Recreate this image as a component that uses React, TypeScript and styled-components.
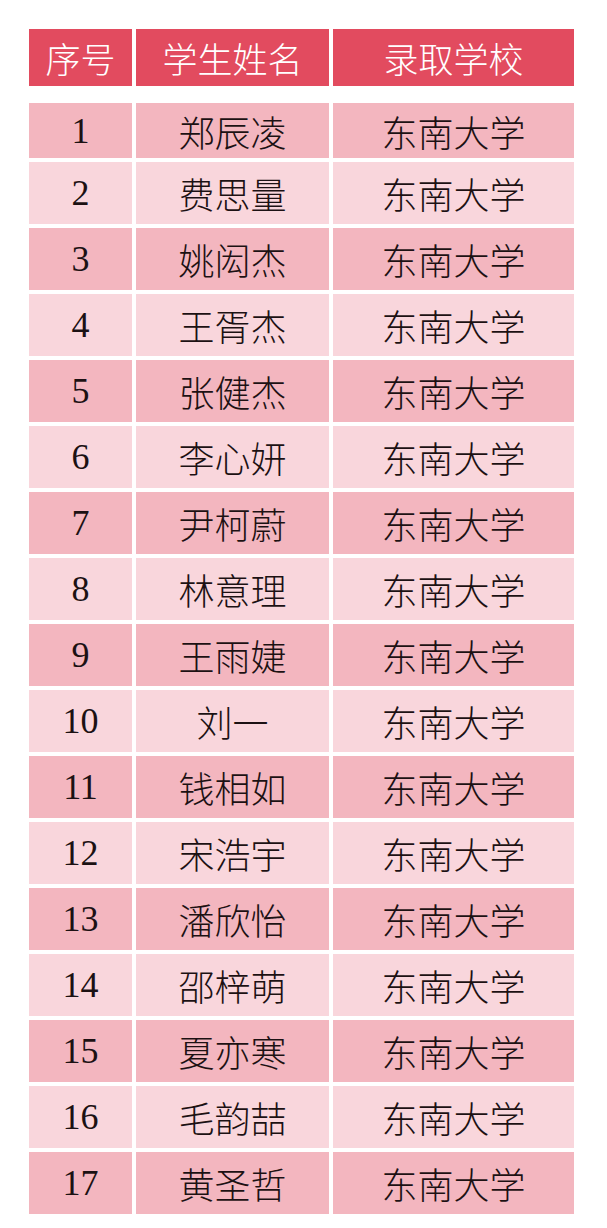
import React from 'react'
import styled, { createGlobalStyle } from 'styled-components'

const GlobalStyle = createGlobalStyle`
  html, body {
    margin: 0;
    padding: 0;
    background: #ffffff;
  }
`;

const Page = styled.div`
  width: 607px;
  height: 1228px;
  padding: 29px 0 0 29px;
  box-sizing: border-box;
  font-family: "Liberation Serif", "Noto Sans CJK SC", serif;
`;

const Table = styled.div`
  width: 545px;
  display: flex;
  flex-direction: column;
  gap: 4px;
`;

const Row = styled.div<{ $h: number }>`
  display: grid;
  grid-template-columns: 103px 193px 241px;
  column-gap: 4px;
  height: ${p => p.$h}px;
`;

const HeadRow = styled(Row)`
  margin-bottom: 13px;
`;

const HeadCell = styled.div`
  background: #e24b5f;
  color: #ffffff;
  display: flex;
  align-items: center;
  justify-content: center;
  font-size: 35px;
  font-family: "Noto Sans CJK SC", sans-serif;
  font-weight: 300;
`;

const Cell = styled.div<{ $odd: boolean }>`
  background: ${p => (p.$odd ? '#f3b6bf' : '#f9d6dc')};
  color: #1c1113;
  display: flex;
  align-items: center;
  justify-content: center;
  font-size: 36px;
  font-weight: 300;
`;

const names = [
  '郑辰凌', '费思量', '姚闳杰', '王胥杰', '张健杰', '李心妍', '尹柯蔚', '林意理', '王雨婕',
  '刘一', '钱相如', '宋浩宇', '潘欣怡', '邵梓萌', '夏亦寒', '毛韵喆', '黄圣哲',
];

export default function App() {
  return (
    <Page>
      <GlobalStyle />
      <Table>
        <HeadRow $h={57}>
          <HeadCell>序号</HeadCell>
          <HeadCell>学生姓名</HeadCell>
          <HeadCell>录取学校</HeadCell>
        </HeadRow>
        {names.map((name, i) => {
          const odd = i % 2 === 0
          return (
            <Row key={i} $h={i === 0 ? 55 : 62}>
              <Cell $odd={odd}>{i + 1}</Cell>
              <Cell $odd={odd}>{name}</Cell>
              <Cell $odd={odd}>东南大学</Cell>
            </Row>
          )
        })}
      </Table>
    </Page>
  )
}
